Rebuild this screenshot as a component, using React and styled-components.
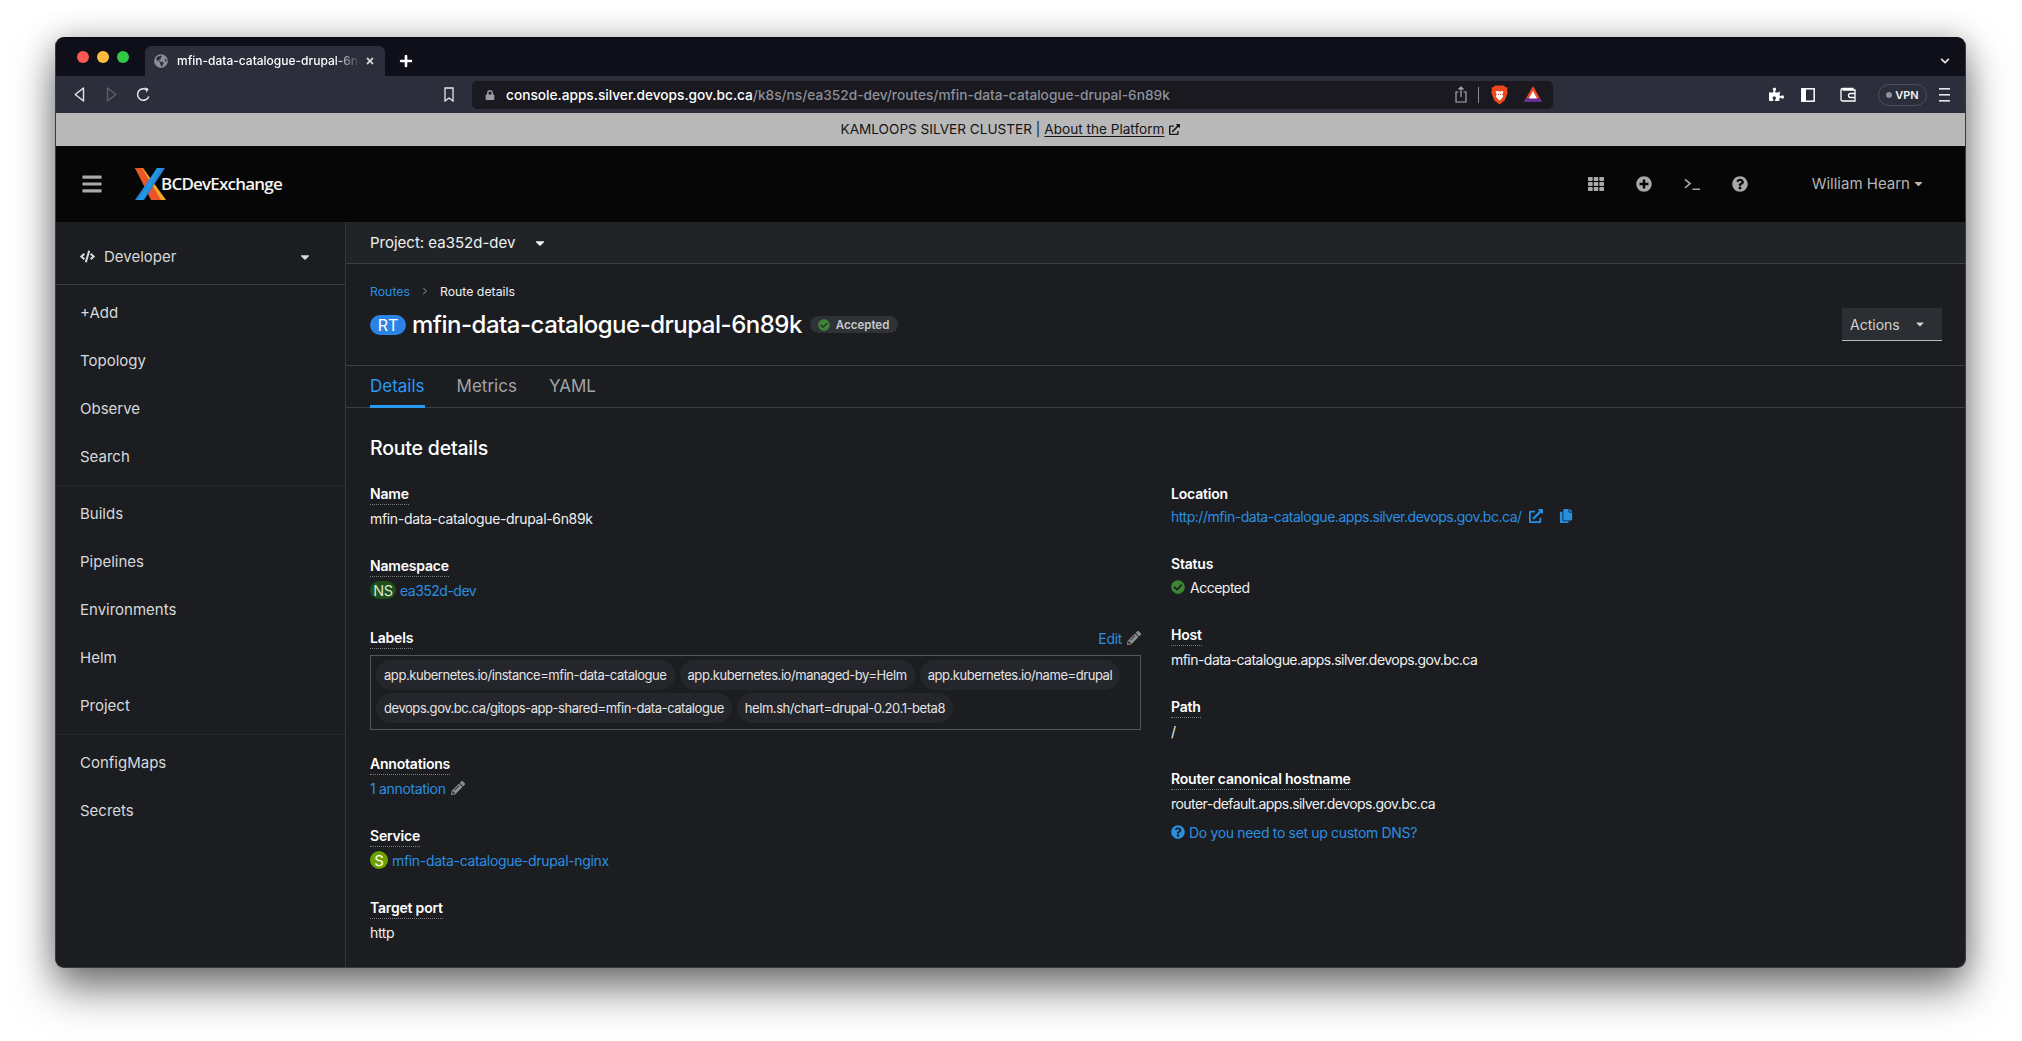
import React from 'react';
import styled, { createGlobalStyle } from 'styled-components';
import { FaTh, FaPlusCircle, FaQuestionCircle, FaPencilAlt, FaCheckCircle, FaExternalLinkAlt, FaCopy, FaPuzzlePiece, FaGlobeAmericas, FaCode, FaBars, FaCaretDown, FaTimes, FaPlus, FaLock, FaChevronRight, FaChevronDown } from 'react-icons/fa';

const Global = createGlobalStyle`
  html, body { margin: 0; padding: 0; background: #fff; }
  body { font-family: Inter, "Liberation Sans", sans-serif; font-size: 14px; height: 1041px; overflow: hidden; }
  * { box-sizing: border-box; }
`;
const Stage = styled.div`padding: 37px 56px 0 55px;`;
const Win = styled.div`
  height: 931px; border-radius: 9px; overflow: hidden; display: flex; flex-direction: column;
  background: #1b1d21; border: 1px solid #3a3b3f; border-top-color: #0a0a0e;
  box-shadow: 0 22px 42px rgba(0,0,0,.5), 0 0 30px rgba(0,0,0,.22);
`;
const TabStrip = styled.div`
  height: 38px; flex: none; background: #0f0f1a; display: flex; align-items: flex-end; padding-left: 21px; position: relative;
`;
const Light = styled.span`
  width: 12px; height: 12px; border-radius: 50%; background: ${p => p.$c}; margin-right: 8px; align-self: flex-start; margin-top: 13px;
`;
const Tab = styled.div`
  width: 240px; height: 30px; margin-left: 8px; background: #2c2e3b; border-radius: 6px 6px 0 0; display: flex; align-items: center; padding: 0 6px 0 9px; color: #fff; font-size: 12px; font-weight: 500;
  svg.g { color: #8d8f98; font-size: 14px; flex: none; }
`;
const TabTitle = styled.span`
  margin-left: 9px; width: 183px; white-space: nowrap; overflow: hidden; line-height: 16px; margin-top: -1px;
  -webkit-mask-image: linear-gradient(90deg,#000 86%,transparent);
`;
const TabClose = styled.span`margin-left: 5px; display: flex; color: #d5d6da; font-size: 10px;`;
const NewTab = styled.span`margin: 0 0 8px 14px; color: #fff; font-size: 14px; display: flex;`;
const Chev = styled.span`margin: 0 15px 10px auto; color: #e6e6e9; font-size: 10px; display: flex;`;
const Toolbar = styled.div`
  height: 37px; flex: none; background: #2c2e3b; display: flex; align-items: center; padding-left: 15px; color: #e8e8ec;
`;
const NavIcon = styled.span`
  width: 16px; flex: none; margin-right: ${p => p.$mr ?? 16}px; display: flex; justify-content: center; color: ${p => p.$dim ? '#5e606c' : '#e8e8ec'};
`;
const UrlBar = styled.div`
  width: 1081px; flex: none; height: 28px; margin-left: 15px; background: #19191f; border-radius: 5px; display: flex; align-items: center; padding-left: 13px; font-size: 13.7px; font-weight: 500; color: #fff;
`;
const UrlHost = styled.span`margin-left: 11px; white-space: nowrap;`;
const UrlPath = styled.span`color: #8e9099; white-space: nowrap;`;
const UrlEnd = styled.div`margin-left: auto; display: flex; align-items: center; padding-right: 11px;`;
const Divider = styled.span`width: 1px; height: 16px; background: #8a8c94; margin: 0 12px 0 11px;`;
const Spacer = styled.span`width: ${p => p.$w}px; flex: none;`;
const ToolRight = styled.div`margin-left: 216px; display: flex; align-items: center; color: #fff; flex: none;`;
const Vpn = styled.span`
  width: 49px; height: 22px; border: 1px solid #4b4e5c; border-radius: 11px; display: flex; align-items: center; justify-content: center; gap: 3px; font-size: 11px; font-weight: 600; color: #f1f1f3;
  i { width: 6px; height: 6px; border-radius: 50%; background: #8f919c; }
`;
const Banner = styled.div`
  height: 33px; flex: none; background: #b8b8b8; color: #151515; display: flex; align-items: center; justify-content: center; font-size: 13.6px; gap: 4px; padding: 0 1px 1px 0;
  u { text-underline-offset: 2px; }
`;
const Masthead = styled.header`
  height: 76px; flex: none; background: #060606; display: flex; align-items: center; padding-left: 25px;
`;
const Burger = styled.span`color: #a8a8a8; display: flex; font-size: 22px;`;
const Logo = styled.div`margin-left: 32px; display: flex; align-items: center;`;
const LogoText = styled.span`
  margin: 0 0 2px -5px; color: #f4f4f4; font-size: 17px; font-weight: 600; letter-spacing: -.8px; font-family: "Open Sans", sans-serif;
`;
const MastRight = styled.div`margin-left: auto; display: flex; align-items: center; color: #a8a8a8; padding-right: 40px;`;
const MastIcon = styled.span`width: 16px; margin-right: 32px; display: flex; justify-content: center; font-size: 16px;`;
const User = styled.span`margin-left: 32px; padding-bottom: 2px; display: flex; align-items: center; gap: 2px; font-size: 15px; color: #b5b5b5;`;
const Body = styled.div`flex: 1; min-height: 0; display: flex;`;
const Side = styled.nav`
  width: 290px; flex: none; background: #1b1d21; border-right: 1px solid #33363a; color: #d8d9da;
`;
const Perspective = styled.div`
  height: 63px; border-bottom: 1px solid #3c3f42; display: flex; align-items: center; padding: 7px 33px 0 24px; font-size: 15px;
  span { margin-left: 9px; }
  svg:last-child { margin-left: auto; }
`;
const NavItem = styled.div`height: 48px; display: flex; align-items: center; padding-left: 24px; font-size: 15px;`;
const NavGroup = styled.div`
  padding: 3px 0 ${p => p.$last ? '0' : '5px'}; border-bottom: ${p => p.$last ? 'none' : '1px solid #24262a'};
`;
const Main = styled.main`flex: 1; min-width: 0; display: flex; flex-direction: column; overflow: hidden;`;
const ProjectBar = styled.div`
  height: 42px; flex: none; background: #212427; border-bottom: 1px solid #3c3f42; display: flex; align-items: center; padding-left: 24px; color: #f0f0f0; font-size: 15px;
  svg { margin-left: 18px; }
`;
const PageHead = styled.div`
  height: 102px; flex: none; padding: 17px 23px 0 24px; border-bottom: 1px solid #3c3f42; display: flex; justify-content: space-between;
`;
const Crumbs = styled.div`display: flex; align-items: center; font-size: 12.3px; height: 20px; color: #f0f0f0;`;
const Crumb = styled.span`color: #6a6d70; margin: 0 11px; display: flex; font-size: 8px;`;
const Blue = styled.span`color: #2b8fe0;`;
const TitleRow = styled.div`display: flex; align-items: center; margin-top: 9px;`;
const KindBadge = styled.span`
  display: inline-flex; align-items: center; justify-content: center; height: ${p => p.$h || 20}px; min-width: ${p => p.$w}px; border-radius: 10px; background: ${p => p.$bg}; color: ${p => p.$fg || '#fff'}; font-size: ${p => p.$fs || 14}px; margin-right: ${p => p.$mr || 4}px; flex: none;
`;
const Title = styled.h1`margin: 0 0 0 2px; font-size: 24px; font-weight: 500; color: #fff; letter-spacing: -.5px;`;
const Pill = styled.span`
  margin-left: 8px; height: 17px; padding: 0 9px 0 8px; background: #2f3236; border-radius: 9px; display: flex; align-items: center; gap: 6px; font-size: 11.5px; font-weight: 600; color: #c7c8c9;
`;
const Actions = styled.div`
  width: 100px; height: 33px; margin-top: 27px; background: #2b2e33; border-bottom: 1px solid #b8bbbe; display: flex; align-items: center; padding: 0 16px 0 8px; justify-content: space-between; color: #d2d2d2; font-size: 14px;
`;
const Tabs = styled.div`
  height: 42px; flex: none; padding: 0 24px; border-bottom: 1px solid #3c3f42; display: flex; gap: 32px;
`;
const TabLink = styled.div`
  height: 42px; line-height: 41px; font-size: 17px; color: ${p => p.$on ? '#2b9af3' : '#a2a4a6'}; border-bottom: ${p => p.$on ? '3px solid #2b9af3' : 'none'};
`;
const Content = styled.div`flex: 1; padding: 27px 24px 0; color: #f0f0f0;`;
const H2 = styled.h2`margin: 0 0 24px; font-size: 19.5px; font-weight: 500; color: #fff; line-height: 26px; letter-spacing: -.2px;`;
const Cols = styled.div`display: grid; grid-template-columns: 771px 1fr; column-gap: 30px;`;
const Col = styled.div`display: flex; flex-direction: column;`;
const Field = styled.div`margin-bottom: ${p => p.$mb ?? 29}px;`;
const LabelRow = styled.div`display: flex; justify-content: space-between; height: 20px;`;
const Label = styled.span`
  display: inline-block; height: 20px; line-height: 18px; font-size: 14px; font-weight: 600; color: #fff; letter-spacing: -.2px;
  border-bottom: ${p => p.$plain ? 'none' : '1px dotted #797c80'};
`;
const Value = styled.div`
  height: 20px; margin-top: ${p => p.$mt ?? 3}px; display: flex; align-items: center; font-size: 14px; color: #f0f0f0; white-space: nowrap; letter-spacing: ${p => p.$ls ?? -0.33}px;
`;
const Link = styled.span`color: #2b8fe0; display: inline-flex; align-items: center; letter-spacing: ${p => p.$ls ?? -0.33}px;`;
const EditLink = styled(Link)`height: 18px; align-self: flex-start;`;
const LabelBox = styled.div`
  margin-top: 6px; border: 1px solid #54565a; padding: 4px 5px 4px; display: flex; flex-wrap: wrap; gap: 3px 5px; height: 75px; align-content: flex-start;
`;
const Chip = styled.span`
  height: 30px; padding: 0 8px; border-radius: 15px; background: #24262b; display: flex; align-items: center; font-size: 13px; letter-spacing: -.44px; color: #e4e4e5; white-space: nowrap;
`;
const Pencil = styled(FaPencilAlt)`color: #8a8d90; font-size: 14px; margin-left: 5px;`;

const LogoX = () => (
  <svg width="31" height="32" viewBox="0 0 31 32">
    <polygon points="0,0 8,0 31,32 22,32" fill="#f7a823" />
    <polygon points="0,0 7,0 26,32 16,32" fill="#e8562a" />
    <polygon points="22,0 30,0 9,32 0,32" fill="#2d7fd8" />
    <polygon points="22,0 26,0 8,32 3,32" fill="#1c9ae4" />
  </svg>
);
const Brave = () => (
  <svg width="17" height="20" viewBox="0 0 17 20">
    <path d="M4 .5h9l1.2 1.5 2.3.6-.4 3 .6 2-3 8-5.2 4-5.200-4-3-8 .6-2-.4-3 2.300-.6z" fill="#f0471f" />
    <path d="M4.500 6.500l2.500-.6 1.500.8 1.500-.8 2.500.6-1.200 3 1 2-3 3.500-.8.500-.8-.5-3-3.500 1-2z" fill="#fff" />
    <path d="M7 9h.9v1H7zM9.100 9H10v1h-.9z" fill="#f0471f" />
  </svg>
);
const Bat = () => (
  <svg width="18" height="17" viewBox="0 0 18 17">
    <polygon points="9,0 18,16 0,16" fill="#ef4a2a" />
    <polygon points="0,16 18,16 15.500,12 2.500,12" fill="#662d91" />
    <polygon points="9,5 13,12.500 5,12.500" fill="#fff" />
  </svg>
);
const FlipWrap = styled.span`display: flex; transform: ${p => p.$flip ? 'scaleX(-1)' : 'none'};`;
const BackIco = ({ flip, c }) => (
  <FlipWrap $flip={flip}>
    <svg width="11" height="15" viewBox="0 0 11 15" fill="none" stroke={c} strokeWidth="1.4" strokeLinejoin="round">
      <path d="M9.500 1v13L1.200 7.500z" />
    </svg>
  </FlipWrap>
);
const Reload = () => (
  <svg width="15" height="15" viewBox="0 0 15 15" fill="none" stroke="#e8e8ec" strokeWidth="1.5">
    <path d="M12.800 9.500A5.800 5.800 0 1 1 10 2.300" />
    <path d="M8.800.2l3.900 1.800-2.200 3.500z" fill="#e8e8ec" stroke="none" />
  </svg>
);
const Bookmark = () => (
  <svg width="10" height="15" viewBox="0 0 10 15" fill="none" stroke="#e8e8ec" strokeWidth="1.300"><path d="M1 1h8v13l-4-3-4 3z" /></svg>
);
const Share = () => (
  <svg width="12" height="17" viewBox="0 0 12 17" fill="none" stroke="#a9abb2" strokeWidth="1.200"><path d="M3.500 6H1v10h10V6H8.500M6 11V1M3.500 3.500L6 1l2.500 2.500" /></svg>
);
const SidebarIco = () => (
  <svg width="14" height="14" viewBox="0 0 14 14"><rect x=".8" y=".8" width="12.400" height="12.400" fill="none" stroke="#fff" strokeWidth="1.500" /><rect x="1" y="1" width="4" height="12" fill="#fff" /></svg>
);
const Wallet = () => (
  <svg width="16" height="15" viewBox="0 0 16 15" fill="none" stroke="#fff" strokeWidth="1.300"><path d="M13 3V1.500H2.500A1.500 1.500 0 0 0 1 3v9.500A1.500 1.500 0 0 0 2.500 14H15V3H2.500" /><path d="M15 6.500h-4.500a1.500 1.500 0 0 0 0 4H15" /></svg>
);
const MenuIco = () => (
  <svg width="11" height="14" viewBox="0 0 11 14" fill="#e8e8ec"><rect width="11" height="1.600" /><rect y="6" width="11" height="1.600" /><rect y="12" width="11" height="1.600" /></svg>
);
const Term = () => (
  <svg width="17" height="13" viewBox="0 0 17 13" fill="none" stroke="#a8a8a8" strokeWidth="1.700"><path d="M1 1l5.500 4.500L1 10" /><path d="M9 11.500h8" /></svg>
);
const ExtIcon = styled(FaExternalLinkAlt)`margin-left: 7px; font-size: 14px;`;
const CopyIcon = styled(FaCopy)`margin-left: 16px; font-size: 14px;`;
const StatusIcon = styled(FaCheckCircle)`margin-right: 5px; font-size: 14px; color: #3e8635;`;
const HelpIcon = styled(FaQuestionCircle)`margin-right: 4px; font-size: 14px;`;

const Field2 = ({ label, plain, mb, mt, ls, children }) => (
  <Field $mb={mb}>
    <LabelRow><Label $plain={plain}>{label}</Label></LabelRow>
    <Value $mt={mt} $ls={ls}>{children}</Value>
  </Field>
);

export default function App() {
  return (
    <Stage>
      <Global />
      <Win>
        <TabStrip>
          <Light $c="#fc5753" /><Light $c="#fdbc40" /><Light $c="#33c748" />
          <Tab>
            <FaGlobeAmericas className="g" />
            <TabTitle>mfin-data-catalogue-drupal-6n89k</TabTitle>
            <TabClose><FaTimes /></TabClose>
          </Tab>
          <NewTab><FaPlus /></NewTab>
          <Chev><FaChevronDown /></Chev>
        </TabStrip>
        <Toolbar>
          <NavIcon><BackIco c="#e8e8ec" /></NavIcon>
          <NavIcon $dim><BackIco flip c="#5e606c" /></NavIcon>
          <NavIcon $mr={290}><Reload /></NavIcon>
          <NavIcon $mr={0}><Bookmark /></NavIcon>
          <UrlBar>
            <FaLock size={10} color="#9a9ca4" />
            <UrlHost>console.apps.silver.devops.gov.bc.ca</UrlHost>
            <UrlPath>/k8s/ns/ea352d-dev/routes/mfin-data-catalogue-drupal-6n89k</UrlPath>
            <UrlEnd>
              <Share /><Divider /><Brave /><Spacer $w={16} /><Bat />
            </UrlEnd>
          </UrlBar>
          <ToolRight>
            <FaPuzzlePiece size={15} /><Spacer $w={17} />
            <SidebarIco /><Spacer $w={25} />
            <Wallet /><Spacer $w={22} />
            <Vpn><i />VPN</Vpn><Spacer $w={12} />
            <MenuIco />
          </ToolRight>
        </Toolbar>
        <Banner>
          KAMLOOPS SILVER CLUSTER | <u>About the Platform</u> <FaExternalLinkAlt size={11} />
        </Banner>
        <Masthead>
          <Burger><FaBars /></Burger>
          <Logo><LogoX /><LogoText>BCDevExchange</LogoText></Logo>
          <MastRight>
            <MastIcon><FaTh /></MastIcon>
            <MastIcon><FaPlusCircle /></MastIcon>
            <MastIcon><Term /></MastIcon>
            <MastIcon><FaQuestionCircle /></MastIcon>
            <User>William Hearn <FaCaretDown size={13} /></User>
          </MastRight>
        </Masthead>
        <Body>
          <Side>
            <Perspective><FaCode size={15} /><span>Developer</span><FaCaretDown size={14} /></Perspective>
            <NavGroup>
              <NavItem>+Add</NavItem><NavItem>Topology</NavItem><NavItem>Observe</NavItem><NavItem>Search</NavItem>
            </NavGroup>
            <NavGroup>
              <NavItem>Builds</NavItem><NavItem>Pipelines</NavItem><NavItem>Environments</NavItem><NavItem>Helm</NavItem><NavItem>Project</NavItem>
            </NavGroup>
            <NavGroup $last>
              <NavItem>ConfigMaps</NavItem><NavItem>Secrets</NavItem>
            </NavGroup>
          </Side>
          <Main>
            <ProjectBar>Project: ea352d-dev <FaCaretDown size={14} /></ProjectBar>
            <PageHead>
              <div>
                <Crumbs><Blue>Routes</Blue><Crumb><FaChevronRight /></Crumb>Route details</Crumbs>
                <TitleRow>
                  <KindBadge $bg="#2b83e6" $w={36} $h={20} $fs={16}>RT</KindBadge>
                  <Title>mfin-data-catalogue-drupal-6n89k</Title>
                  <Pill><FaCheckCircle size={12} color="#3e8635" />Accepted</Pill>
                </TitleRow>
              </div>
              <Actions>Actions <FaCaretDown size={12} /></Actions>
            </PageHead>
            <Tabs>
              <TabLink $on>Details</TabLink><TabLink>Metrics</TabLink><TabLink>YAML</TabLink>
            </Tabs>
            <Content>
              <H2>Route details</H2>
              <Cols>
                <Col>
                  <Field2 label="Name">mfin-data-catalogue-drupal-6n89k</Field2>
                  <Field2 label="Namespace">
                    <KindBadge $bg="#1e4f18" $w={26} $h={18} $fg="#d8e6d4" $fs={14.5}>NS</KindBadge><Link $ls={-0.5}>ea352d-dev</Link>
                  </Field2>
                  <Field $mb={25}>
                    <LabelRow><Label>Labels</Label><EditLink>Edit<Pencil /></EditLink></LabelRow>
                    <LabelBox>
                      <Chip>app.kubernetes.io/instance=mfin-data-catalogue</Chip>
                      <Chip>app.kubernetes.io/managed-by=Helm</Chip>
                      <Chip>app.kubernetes.io/name=drupal</Chip>
                      <Chip>devops.gov.bc.ca/gitops-app-shared=mfin-data-catalogue</Chip>
                      <Chip>helm.sh/chart=drupal-0.20.1-beta8</Chip>
                    </LabelBox>
                  </Field>
                  <Field2 label="Annotations"><Link>1 annotation<Pencil /></Link></Field2>
                  <Field2 label="Service">
                    <KindBadge $bg="#6ca100" $w={18} $h={18} $fs={15}>S</KindBadge><Link>mfin-data-catalogue-drupal-nginx</Link>
                  </Field2>
                  <Field2 label="Target port">http</Field2>
                </Col>
                <Col>
                  <Field2 label="Location" plain mt={1}>
                    <Link $ls={-0.47}>http://mfin-data-catalogue.apps.silver.devops.gov.bc.ca/<ExtIcon /><CopyIcon /></Link>
                  </Field2>
                  <Field2 label="Status" plain mt={2} ls={-0.5}>
                    <StatusIcon />Accepted
                  </Field2>
                  <Field2 label="Host" ls={-0.54}>mfin-data-catalogue.apps.silver.devops.gov.bc.ca</Field2>
                  <Field2 label="Path">/</Field2>
                  <Field2 label="Router canonical hostname" mb={9} ls={-0.54}>router-default.apps.silver.devops.gov.bc.ca</Field2>
                  <Value $mt={0}><Link><HelpIcon />Do you need to set up custom DNS?</Link></Value>
                </Col>
              </Cols>
            </Content>
          </Main>
        </Body>
      </Win>
    </Stage>
  );
}
